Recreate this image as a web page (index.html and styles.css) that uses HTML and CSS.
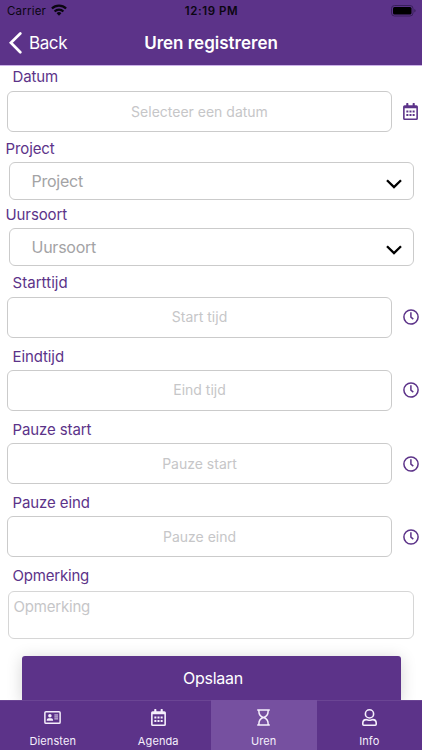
FILE: index.html
```
<!DOCTYPE html>
<html lang="nl">
<head>
<meta charset="utf-8">
<meta name="viewport" content="width=device-width, initial-scale=1">
<title>Uren registreren</title>
<link rel="stylesheet" href="styles.css">
</head>
<body>
<svg class="defs" width="0" height="0" aria-hidden="true">
  <symbol id="calendar" viewBox="0 0 14 16">
    <path fill="currentColor" fill-rule="evenodd" d="M3 .4a.4.4 0 0 1 .4-.4h1.2a.4.4 0 0 1 .4.4V2h4V.4a.4.4 0 0 1 .4-.4h1.2a.4.4 0 0 1 .4.4V2h1.5A1.5 1.5 0 0 1 14 3.500v11a1.500 1.500 0 0 1-1.500 1.500h-11A1.500 1.500 0 0 1 0 14.500v-11A1.500 1.500 0 0 1 1.500 2H3zM1.500 5v9.300q0 .2.200.2h10.600q.2 0 .2-.2V5z"/>
    <path fill="currentColor" d="M3.100 7h1.900v1.900H3.100zM6.050 7h1.900v1.900h-1.900zM9 7h1.900v1.900H9zM3.100 10.300h1.900v1.900H3.100zM6.050 10.300h1.900v1.900h-1.900zM9 10.300h1.900v1.900H9z"/>
  </symbol>
  <symbol id="clock" viewBox="0 0 16 16">
    <g fill="none" stroke="currentColor" stroke-width="1.500">
      <circle cx="8" cy="8" r="7.100"/>
      <path d="M7.900 3.300v4.900l2.400 1.900" stroke-linejoin="round"/>
    </g>
  </symbol>
  <symbol id="card" viewBox="0 0 18 14">
    <rect x=".8" y=".8" width="16.400" height="12.400" rx="1.200" fill="none" stroke="currentColor" stroke-width="1.600"/>
    <path fill="currentColor" d="M6.200 3.200a1.900 1.900 0 1 1 0 3.800 1.900 1.900 0 0 1 0-3.800zM2.800 10.600v-.8q0-1.900 2-2h2.800q2 .1 2 2v.8z"/>
    <path stroke="currentColor" d="M11 4.300h4M11 6.400h4M11 8.500h4"/>
  </symbol>
  <symbol id="hourglass" viewBox="0 0 13 17">
    <path fill="none" stroke="currentColor" stroke-width="1.500" d="M.2.900h12.600M.2 16.100h12.600M1.900 1v1.500c0 3 1.500 5 4.600 6-3.100 1-4.600 3-4.600 6V16M11.100 1v1.500c0 3-1.500 5-4.600 6 3.100 1 4.600 3 4.600 6V16"/>
  </symbol>
  <symbol id="user" viewBox="0 0 15 17">
    <g fill="none" stroke="currentColor" stroke-width="1.600">
      <circle cx="7.500" cy="4.900" r="4.100"/>
      <path d="M4.300 10.600c1.300 0 1.700.6 3.200.6s1.900-.6 3.200-.6c2.200 0 3.500 1.600 3.500 3.500v1.200q0 .9-.9.9H1.700q-.9 0-.9-.9v-1.200c0-1.900 1.300-3.500 3.500-3.500z"/>
    </g>
  </symbol>
  <symbol id="chevron" viewBox="0 0 16 10">
    <path fill="none" stroke="currentColor" stroke-width="2.300" d="M1 1.200l7 6.900 7-6.900"/>
  </symbol>
</svg>

<div class="app">
  <header class="header">
    <div class="status">
      <div class="carrier">
        <span class="carrier-name">Carrier</span>
        <svg class="wifi" viewBox="0 0 16 12">
          <g fill="none" stroke="currentColor" stroke-width="2.200">
            <path d="M.9 4.600a10 10 0 0 1 14.200 0"/>
            <path d="M3.600 7.500a6.200 6.200 0 0 1 8.800 0"/>
          </g>
          <path fill="currentColor" d="M8 11.800L5.600 9.300a3.400 3.400 0 0 1 4.800 0z"/>
        </svg>
      </div>
      <span class="time">12:19 PM</span>
      <svg class="battery" viewBox="0 0 25 12">
        <rect x=".5" y=".5" width="21.500" height="10.500" rx="3" fill="none" stroke="#38205a"/>
        <rect x="2" y="2" width="18.500" height="7.500" rx="1.500"/>
        <path d="M23.300 4v3.600q1.300-.5 1.300-1.800T23.300 4z" fill="#38205a"/>
      </svg>
    </div>
    <div class="nav">
      <a class="back">
        <svg class="back-icon" viewBox="0 0 13 22"><path d="M11.300 1.500L1.900 10.800l9.400 9.400" fill="none" stroke="currentColor" stroke-width="2.700" stroke-linecap="round"/></svg>
        <span class="back-text">Back</span>
      </a>
      <h1 class="title">Uren registreren</h1>
    </div>
  </header>

  <main class="form">
    <section class="field">
      <div class="label datum">Datum</div>
      <div class="row"><div class="input"><span class="ph-datum">Selecteer een datum</span></div><svg class="icon calendar"><use href="#calendar"/></svg></div>
    </section>
    <section class="field project">
      <div class="label">Project</div>
      <div class="select"><span>Project</span><svg class="chevron"><use href="#chevron"/></svg></div>
    </section>
    <section class="field uursoort">
      <div class="label">Uursoort</div>
      <div class="select"><span>Uursoort</span><svg class="chevron"><use href="#chevron"/></svg></div>
    </section>
    <section class="field start">
      <div class="label">Starttijd</div>
      <div class="row"><div class="input"><span>Start tijd</span></div><svg class="icon clock"><use href="#clock"/></svg></div>
    </section>
    <section class="field timed">
      <div class="label">Eindtijd</div>
      <div class="row"><div class="input"><span>Eind tijd</span></div><svg class="icon clock"><use href="#clock"/></svg></div>
    </section>
    <section class="field timed">
      <div class="label">Pauze start</div>
      <div class="row"><div class="input"><span>Pauze start</span></div><svg class="icon clock"><use href="#clock"/></svg></div>
    </section>
    <section class="field timed">
      <div class="label">Pauze eind</div>
      <div class="row"><div class="input"><span>Pauze eind</span></div><svg class="icon clock"><use href="#clock"/></svg></div>
    </section>
    <section class="field remark">
      <div class="label">Opmerking</div>
      <div class="textarea">Opmerking</div>
    </section>
    <div class="save">Opslaan</div>
  </main>

  <nav class="tabs">
    <a class="tab"><svg class="tab-icon card"><use href="#card"/></svg><span>Diensten</span></a>
    <a class="tab"><svg class="tab-icon agenda"><use href="#calendar"/></svg><span>Agenda</span></a>
    <a class="tab active"><svg class="tab-icon hourglass"><use href="#hourglass"/></svg><span>Uren</span></a>
    <a class="tab"><svg class="tab-icon user"><use href="#user"/></svg><span>Info</span></a>
  </nav>
</div>
</body>
</html>
```
FILE: styles.css
```
* { box-sizing: border-box; }
body {
  margin: 0;
  background: #fff;
  font-family: Inter, "Liberation Sans", sans-serif;
  color: #5c3389;
}
.defs { display: none; }
.app {
  width: 422px;
  height: 750px;
  display: flex;
  flex-direction: column;
  overflow: hidden;
}
.header {
  flex: none;
  height: 66px;
  background: #5c3389;
  border-bottom: 1px solid #cdb2e9;
}
.status {
  height: 22px;
  display: grid;
  grid-template-columns: 1fr auto 1fr;
  align-items: center;
  padding: 0 6px 0 7px;
  color: #0b0611;
  font-size: 11.5px;
}
.carrier { display: flex; align-items: center; gap: 5px; }
.carrier-name { letter-spacing: .2px; }
.wifi { width: 16px; height: 12px; margin-top: -2px; }
.time { font-weight: 600; letter-spacing: .6px; }
.battery { width: 25px; height: 12px; justify-self: end; }
.nav {
  height: 42px;
  display: grid;
  grid-template-columns: 1fr auto 1fr;
  align-items: center;
  padding: 0 9px;
  color: #fff;
}
.back { display: flex; align-items: center; gap: 7px; font-size: 17px; letter-spacing: -.4px; }
.back-icon { width: 13px; height: 22px; }
.title { margin: 0; font-size: 17px; font-weight: 600; }
.form { height: 634px; padding-top: 1px; overflow: hidden; }
.label {
  height: 20px;
  line-height: 20px;
  margin: 0 0 4px 12.500px;
  font-size: 15px;
  letter-spacing: -.1px;
}
.row { display: flex; align-items: center; }
.input {
  width: 385px;
  height: 41px;
  margin-left: 7px;
  padding-bottom: 1px;
  border: 1px solid #cbcbcb;
  border-radius: 6px;
  display: flex;
  align-items: center;
  justify-content: center;
  font-size: 14px;
  color: #c6c6c8;
}
.icon { flex: none; }
.calendar { width: 15px; height: 17px; margin-left: 11px; }
.clock { width: 16px; height: 16px; margin-left: 10.500px; }
.project { margin-top: 6px; }
.uursoort { margin-top: 4px; }
.start { margin-top: 6.500px; }
.start .label { letter-spacing: .05px; }
.timed { margin-top: 8.330px; }
.timed .label { line-height: 21px; }
.remark { margin-top: 8.500px; }
.project .label, .uursoort .label { margin-left: 5.500px; line-height: 22px; }
.select {
  width: 405px;
  height: 38px;
  margin-left: 8.500px;
  padding: 0 11px 0 22px;
  border: 1px solid #cbcbcb;
  border-radius: 6px;
  display: flex;
  align-items: center;
  justify-content: space-between;
  font-size: 16px;
  letter-spacing: -.25px;
  color: #a3a3a5;
}
.chevron { width: 16px; height: 10px; margin-top: 6px; color: #000; }
.remark .label { margin-bottom: 5.500px; letter-spacing: -.2px; }
.textarea {
  width: 406px;
  height: 47.500px;
  margin-left: 7.500px;
  padding: 5px;
  border: 1.500px solid #d6d6d6;
  border-radius: 6px;
  font-size: 15px;
  letter-spacing: -.2px;
  line-height: 20px;
  color: #c6c6c8;
}
.save {
  width: 379px;
  height: 46px;
  margin: 17px 0 0 21.500px;
  padding-left: 4px;
  border-radius: 3px;
  background: #5c3389;
  box-shadow: 0 2px 16px rgba(0, 0, 0, .17);
  color: #fff;
  font-size: 16px;
  letter-spacing: -.25px;
  line-height: 45px;
  text-align: center;
}
.tabs {
  flex: none;
  position: relative;
  height: 50px;
  display: grid;
  grid-template-columns: repeat(4, 1fr);
  background: #5c3389;
  box-shadow: inset 0 1px #6b4594;
}
.tab {
  display: flex;
  flex-direction: column;
  align-items: center;
  justify-content: space-between;
  padding: 9px 0 1px;
  color: #f5effc;
  font-size: 11px;
  letter-spacing: .1px;
  line-height: 15px;
}
.active { background: #7650a0; }
.card { width: 17px; height: 13px; margin-top: 2px; }
.agenda { width: 15px; height: 17px; }
.hourglass { width: 13px; height: 17px; }
.user { width: 15px; height: 17px; }
```
